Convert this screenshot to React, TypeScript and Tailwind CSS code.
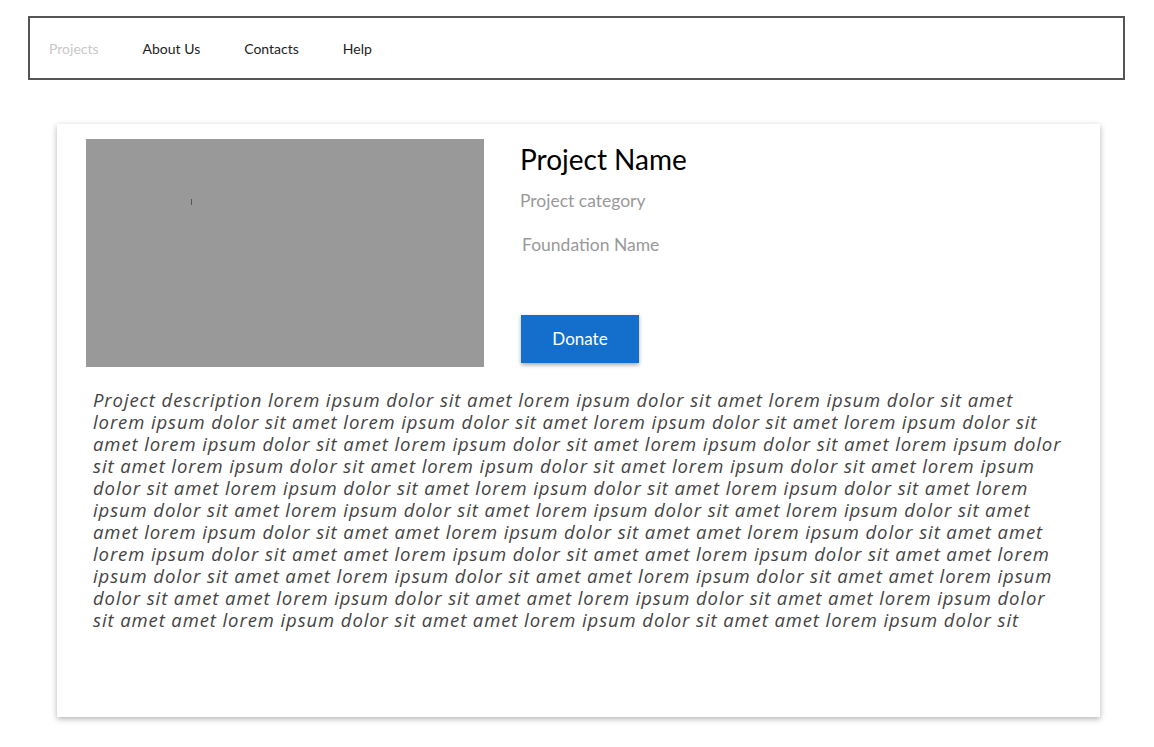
const lines = [
  "Project description lorem ipsum dolor sit amet lorem ipsum dolor sit amet lorem ipsum dolor sit amet",
  "lorem ipsum dolor sit amet lorem ipsum dolor sit amet lorem ipsum dolor sit amet lorem ipsum dolor sit",
  "amet lorem ipsum dolor sit amet lorem ipsum dolor sit amet lorem ipsum dolor sit amet lorem ipsum dolor",
  "sit amet lorem ipsum dolor sit amet lorem ipsum dolor sit amet lorem ipsum dolor sit amet lorem ipsum",
  "dolor sit amet lorem ipsum dolor sit amet lorem ipsum dolor sit amet lorem ipsum dolor sit amet lorem",
  "ipsum dolor sit amet lorem ipsum dolor sit amet lorem ipsum dolor sit amet lorem ipsum dolor sit amet",
  "amet lorem ipsum dolor sit amet amet lorem ipsum dolor sit amet amet lorem ipsum dolor sit amet amet",
  "lorem ipsum dolor sit amet amet lorem ipsum dolor sit amet amet lorem ipsum dolor sit amet amet lorem",
  "ipsum dolor sit amet amet lorem ipsum dolor sit amet amet lorem ipsum dolor sit amet amet lorem ipsum",
  "dolor sit amet amet lorem ipsum dolor sit amet amet lorem ipsum dolor sit amet amet lorem ipsum dolor",
  "sit amet amet lorem ipsum dolor sit amet amet lorem ipsum dolor sit amet amet lorem ipsum dolor sit",
];

const navItems = ["Projects", "About Us", "Contacts", "Help"];

export default function App() {
  return (
    <div className="min-h-[747px] bg-white pt-4 font-['Lato',sans-serif]">
      <nav className="mx-[28px] flex h-16 w-[1097px] items-center border-2 border-[#555] pl-[19px] text-[14px]">
        {navItems.map((item, i) => (
          <a
            key={item}
            href="#"
            className={
              i === 0
                ? "mr-[44px] text-[#c8c8c8]"
                : "mr-[44px] text-[#222]"
            }
          >
            {item}
          </a>
        ))}
      </nav>

      <main className="ml-[57px] mt-[44px] h-[593px] w-[1043px] bg-white pt-[15px] shadow-[0_2px_6px_rgba(0,0,0,0.3)]">
        <div className="flex pl-[29px]">
          <div className="relative h-[228px] w-[398px] bg-[#999]">
            <span className="absolute left-[105px] top-[60px] h-[6px] w-px bg-[#555]" />
          </div>
          <div className="ml-[36px] flex flex-col">
            <h1 className="mt-[3px] text-[28px] leading-[34px] text-black">Project Name</h1>
            <p className="mt-[12px] text-[17.5px] text-[#999]">Project category</p>
            <p className="ml-[2px] mt-[18px] text-[17.5px] text-[#999]">Foundation Name</p>
            <button
              type="button"
              className="ml-px mt-[56px] h-[48px] w-[118px] bg-[#136fcb] text-[17px] text-white shadow-[0_2px_4px_rgba(0,0,0,0.35)]"
            >
              Donate
            </button>
          </div>
        </div>

        <div className="ml-[36px] mt-[22px] font-['Open_Sans',sans-serif] text-[18.5px] italic leading-[22px] tracking-[0.9px] text-[#444]">
          {lines.map((l, i) => (
            <div key={i} className="whitespace-nowrap">
              {l}
            </div>
          ))}
        </div>
      </main>
    </div>
  );
}
